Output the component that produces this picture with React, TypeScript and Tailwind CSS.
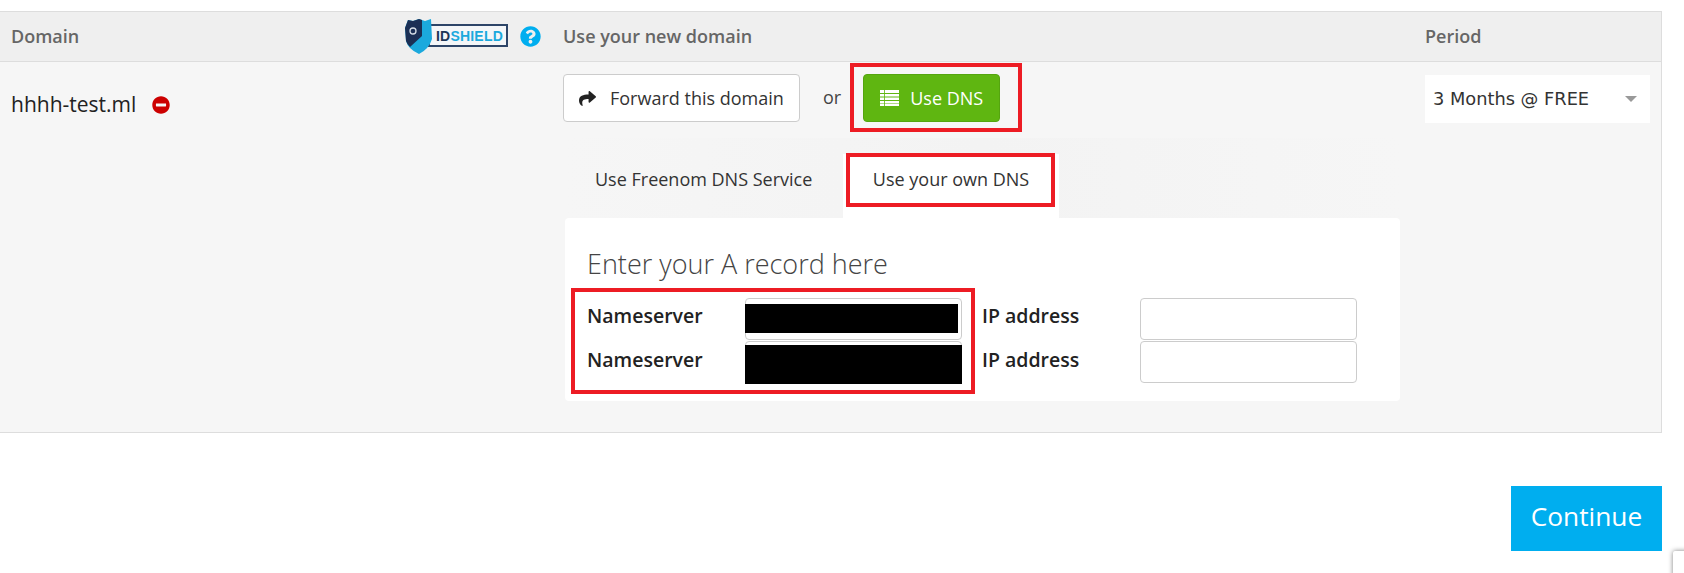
import { FaShare, FaMinusCircle, FaQuestionCircle } from 'react-icons/fa';

function RedBox({ className }: { className: string }) {
  return <div className={`absolute border-[4px] border-[#ed1c24] pointer-events-none ${className}`} />;
}

function IdShieldLogo() {
  return (
    <div className="relative w-[103px] h-[35px] shrink-0">
      <div className="absolute left-[22px] top-[5px] w-[80px] h-[23px] border-2 border-[#2d4568] bg-[#f4f6f8] flex items-center pl-[6px] font-['Liberation_Sans',sans-serif] text-[14px] font-bold leading-none tracking-[0.2px]">
        <span className="text-[#1d3557]">ID</span>
        <span className="text-[#1ba9dd]">SHIELD</span>
      </div>
      <svg className="absolute left-[-1px] top-0" width="28" height="35" viewBox="0 0 28 35">
        <path d="M3 1 L8 2 L14 0 L20 2 L26 0 L27 20 Q24 30 14 35 Q3 30 1 22 L0 9 Z" fill="#1ba9dd" />
        <path d="M3 1 L8 2 L14 0 L17 1 L17 17 L5 28 Q2 25 1 22 L0 9 Z" fill="#1b2f55" />
        <circle cx="8" cy="12" r="3" fill="none" stroke="#d5dde6" strokeWidth="1.3" />
      </svg>
    </div>
  );
}

function ListIcon() {
  return (
    <svg width="19" height="16" viewBox="0 0 19 16" fill="white">
      <rect x="0" y="0" width="19" height="3" />
      <rect x="0" y="4" width="19" height="2.5" />
      <rect x="0" y="7.5" width="19" height="2.5" />
      <rect x="0" y="11" width="19" height="2.5" />
      <rect x="0" y="14" width="19" height="2" />
      <rect x="4" y="0" width="0.8" height="16" fill="#5fb611" />
    </svg>
  );
}

function RecordRow({ blackClass }: { blackClass: string }) {
  return (
    <div className="flex items-center h-[43.5px]">
      <label className="w-[158px] pb-[6px] text-[19.5px] font-semibold text-[#222]">Nameserver</label>
      <div className="relative w-[217px] h-[42px] bg-white border border-[#ccc] rounded-[4px]">
        <div className={`absolute bg-black ${blackClass}`} />
      </div>
      <label className="ml-[20px] w-[158px] pb-[6px] text-[19.5px] font-semibold text-[#222]">IP address</label>
      <input className="w-[217px] h-[42px] bg-white border border-[#ccc] rounded-[4px]" />
    </div>
  );
}

export default function App() {
  return (
    <div className="relative h-[573px] w-[1684px] bg-white overflow-hidden font-['Open_Sans',sans-serif]">
      <div className="pt-[11px] w-[1662px]">
        <div className="border-y border-r border-[#dddddd] bg-[#f6f6f6]">
          <div className="flex items-center h-[50px] bg-[#efefef] border-b border-[#dddddd] text-[18px] font-semibold text-[#666]">
            <div className="w-[563px] pl-[11px] pr-[22px] flex items-center">
              <span>Domain</span>
              <div className="ml-auto flex items-center gap-[11px]">
                <IdShieldLogo />
                <FaQuestionCircle className="text-[#00aeef] text-[21px]" />
              </div>
            </div>
            <div className="w-[862px]">Use your new domain</div>
            <div>Period</div>
          </div>

          <div className="flex h-[370px]">
            <div className="w-[563px] pl-[11px] pt-[27px]">
              <div className="flex items-center gap-[16px] text-[21px] text-[#222]">
                <span>hhhh-test.ml</span>
                <FaMinusCircle className="text-[#cc0000] text-[18px]" />
              </div>
            </div>

            <div className="w-[862px] pt-[12px]">
              <div className="flex items-center">
                <button className="flex items-center gap-[14px] w-[237px] h-[48px] pl-[15px] bg-white border border-[#ccc] rounded-[4px] text-[18px] text-[#333]">
                  <FaShare className="text-[#222] text-[17px]" />
                  Forward this domain
                </button>
                <span className="ml-[23px] pb-[2px] text-[18px] text-[#444]">or</span>
                <button className="ml-[22px] flex items-center gap-[11px] w-[137px] h-[48px] pl-[16px] bg-[#5fb611] border border-[#55a50f] rounded-[4px] text-[18px] text-white">
                  <ListIcon />
                  Use DNS
                </button>
              </div>

              <div className="mt-[16px] ml-[2px] w-[835px] pt-[16px] bg-gradient-to-r from-[#f6f6f6] via-[#f3f3f3] to-[#f6f6f6]">
                <div className="flex h-[64px] ml-[30px] text-[18px] text-[#333]">
                  <div className="w-[248px] pt-[12px]">Use Freenom DNS Service</div>
                  <div className="w-[216px] bg-white text-center pt-[12px]">Use your own DNS</div>
                </div>
                <div className="bg-white w-[835px] h-[183px] rounded-[4px] pl-[22px] pt-[28px]">
                  <h2 className="text-[27px] font-light text-[#444] leading-[36px]">Enter your A record here</h2>
                  <div className="mt-[15px]">
                    <RecordRow blackClass="left-[-1px] top-[5px] w-[213px] h-[29px]" />
                    <RecordRow blackClass="left-[-1px] top-[3px] w-[217px] h-[39px]" />
                  </div>
                </div>
              </div>
            </div>

            <div className="pt-[13px]">
              <div className="flex items-center justify-between w-[225px] h-[48px] bg-white pl-[8px] pr-[13px] font-['DejaVu_Sans',sans-serif] text-[17.8px] text-[#333]">
                <span>3 Months @ FREE</span>
                <span className="w-0 h-0 border-x-[6px] border-x-transparent border-t-[6px] border-t-[#999]" />
              </div>
            </div>
          </div>
        </div>

        <div className="flex justify-end mt-[53px]">
          <button className="w-[151px] h-[65px] pb-[3px] bg-[#00aeef] text-white text-[26.3px]">Continue</button>
        </div>
      </div>

      <RedBox className="left-[850px] top-[63px] w-[172px] h-[69px]" />
      <RedBox className="left-[846px] top-[153px] w-[209px] h-[54px]" />
      <RedBox className="left-[571px] top-[288px] w-[404px] h-[106px]" />

      <div className="absolute left-[1673px] top-[551px] w-[40px] h-[40px] bg-white rounded-[2px] shadow-[0_0_5px_rgba(0,0,0,0.5)]" />
    </div>
  );
}
